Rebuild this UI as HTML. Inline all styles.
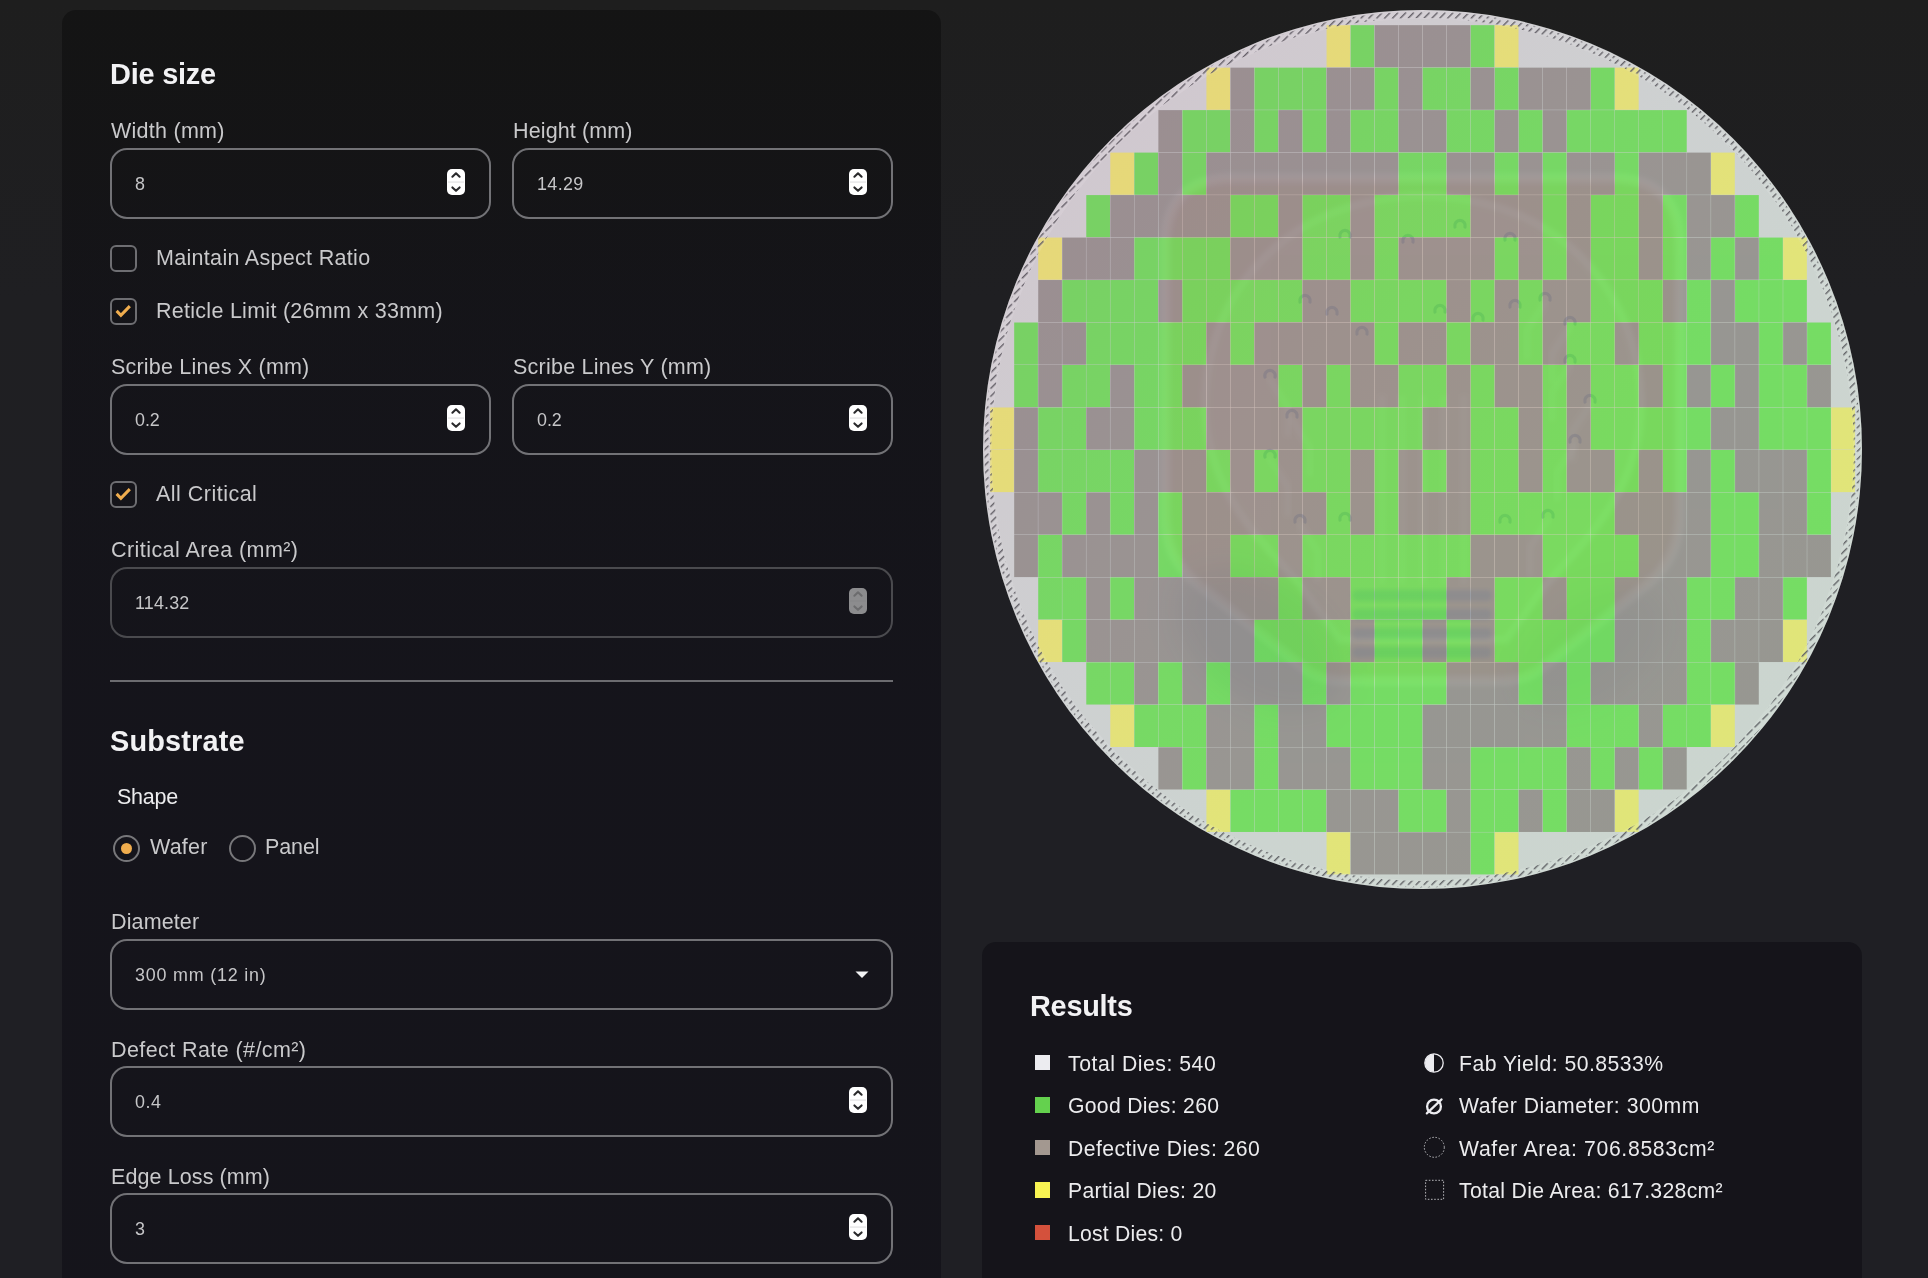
<!DOCTYPE html>
<html lang="en"><head><meta charset="utf-8"><title>Die Yield Calculator</title>
<style>
html,body{margin:0;padding:0}
body{width:1928px;height:1278px;overflow:hidden;background:linear-gradient(180deg,#1e1e1e 0px,#1f1f22 300px,#1f1f24 700px,#1f1f24 1278px);position:relative;font-family:"Liberation Sans",sans-serif;color:#d0d0d2}
.abs{position:absolute;white-space:nowrap}
.t{will-change:transform}
.panel{position:absolute;background:rgba(0,0,0,0.345);border-radius:14px}
.h{font-weight:bold;color:#f2f2f4;font-size:27px;line-height:30px}
.lbl{font-size:20px;line-height:24px;color:#cfcfd1;letter-spacing:0.35px}
.inp{position:absolute;box-sizing:border-box;height:71.3px;border:2px solid #727276;border-radius:17px}
.inp.dis{border-color:#4a4a4e}
.val{position:absolute;left:23px;top:22px;font-size:17.5px;line-height:22px;color:#c9c9cb;letter-spacing:0.6px}
.spin{position:absolute;right:24px;top:18.9px;width:18px;height:26px;border-radius:5px;background:#fff}
.spin.dis{background:#8c8c8e}
.cb{position:absolute;box-sizing:border-box;width:27px;height:27px;border:2px solid #6e6e72;border-radius:6px}
.rad{position:absolute;box-sizing:border-box;width:27px;height:27px;border:2px solid #77777a;border-radius:50%}
.sq{position:absolute;width:15.7px;height:15.6px}
.res{font-size:20px;line-height:24px;color:#ececee;letter-spacing:0.45px}
</style></head>
<body>
<div class="panel" style="left:62px;top:10px;width:879px;height:1300px;background:linear-gradient(180deg,rgba(0,0,0,0.345) 0px,rgba(1,0,7,0.345) 300px,rgba(2,0,10,0.345) 700px)"></div>
<div class="abs t " style="left:109.90px;top:57.39px;font-size:28.9px;line-height:35px;letter-spacing:-0.203px;font-weight:bold;color:#f2f2f4;">Die size</div>
<div class="abs t " style="left:110.80px;top:118.45px;font-size:21.5px;line-height:26px;letter-spacing:0.259px;color:#c9c9cb;">Width (mm)</div>
<div class="abs t " style="left:513.40px;top:118.45px;font-size:21.5px;line-height:26px;letter-spacing:0.123px;color:#c9c9cb;">Height (mm)</div>
<div class="inp" style="left:110.0px;top:148.2px;width:381.3px"><div class="spin"><svg width="18" height="26" viewBox="0 0 18 26" style="position:absolute;left:0;top:0"><path d="M5.4 7.7 L9 4.3 L12.6 7.7" fill="none" stroke="#2a2a2c" stroke-width="2.1" stroke-linecap="round" stroke-linejoin="round"/><path d="M5.4 18.4 L9 21.8 L12.6 18.4" fill="none" stroke="#2a2a2c" stroke-width="2.1" stroke-linecap="round" stroke-linejoin="round"/><rect x="1" y="12.6" width="16" height="0.9" fill="#d8d8da"/></svg></div></div>
<div class="abs t " style="left:135.30px;top:174.20px;font-size:17.9px;line-height:21px;letter-spacing:0.000px;color:#c6c6c8;">8</div>
<div class="inp" style="left:512.0px;top:148.2px;width:381.3px"><div class="spin"><svg width="18" height="26" viewBox="0 0 18 26" style="position:absolute;left:0;top:0"><path d="M5.4 7.7 L9 4.3 L12.6 7.7" fill="none" stroke="#2a2a2c" stroke-width="2.1" stroke-linecap="round" stroke-linejoin="round"/><path d="M5.4 18.4 L9 21.8 L12.6 18.4" fill="none" stroke="#2a2a2c" stroke-width="2.1" stroke-linecap="round" stroke-linejoin="round"/><rect x="1" y="12.6" width="16" height="0.9" fill="#d8d8da"/></svg></div></div>
<div class="abs t " style="left:537.30px;top:174.20px;font-size:17.9px;line-height:21px;letter-spacing:0.379px;color:#c6c6c8;">14.29</div>
<div class="cb" style="left:110.3px;top:245.3px"></div>
<div class="abs t " style="left:155.90px;top:245.35px;font-size:21.5px;line-height:26px;letter-spacing:0.308px;color:#c9c9cb;">Maintain Aspect Ratio</div>
<div class="cb" style="left:110.3px;top:297.6px"><svg width="23" height="23" viewBox="0 0 23 23" style="position:absolute;left:0;top:0"><path d="M4.6 10.9 L8.9 15.4 L17.8 6.1" fill="none" stroke="#f0ad4e" stroke-width="3.0" stroke-linecap="butt" stroke-linejoin="miter"/></svg></div>
<div class="abs t " style="left:155.90px;top:297.95px;font-size:21.5px;line-height:26px;letter-spacing:0.275px;color:#c9c9cb;">Reticle Limit (26mm x 33mm)</div>
<div class="abs t " style="left:110.80px;top:354.25px;font-size:21.5px;line-height:26px;letter-spacing:0.197px;color:#c9c9cb;">Scribe Lines X (mm)</div>
<div class="abs t " style="left:512.80px;top:354.25px;font-size:21.5px;line-height:26px;letter-spacing:0.240px;color:#c9c9cb;">Scribe Lines Y (mm)</div>
<div class="inp" style="left:110.0px;top:384.0px;width:381.3px"><div class="spin"><svg width="18" height="26" viewBox="0 0 18 26" style="position:absolute;left:0;top:0"><path d="M5.4 7.7 L9 4.3 L12.6 7.7" fill="none" stroke="#2a2a2c" stroke-width="2.1" stroke-linecap="round" stroke-linejoin="round"/><path d="M5.4 18.4 L9 21.8 L12.6 18.4" fill="none" stroke="#2a2a2c" stroke-width="2.1" stroke-linecap="round" stroke-linejoin="round"/><rect x="1" y="12.6" width="16" height="0.9" fill="#d8d8da"/></svg></div></div>
<div class="abs t " style="left:135.30px;top:409.80px;font-size:17.9px;line-height:21px;letter-spacing:-0.040px;color:#c6c6c8;">0.2</div>
<div class="inp" style="left:512.0px;top:384.0px;width:381.3px"><div class="spin"><svg width="18" height="26" viewBox="0 0 18 26" style="position:absolute;left:0;top:0"><path d="M5.4 7.7 L9 4.3 L12.6 7.7" fill="none" stroke="#2a2a2c" stroke-width="2.1" stroke-linecap="round" stroke-linejoin="round"/><path d="M5.4 18.4 L9 21.8 L12.6 18.4" fill="none" stroke="#2a2a2c" stroke-width="2.1" stroke-linecap="round" stroke-linejoin="round"/><rect x="1" y="12.6" width="16" height="0.9" fill="#d8d8da"/></svg></div></div>
<div class="abs t " style="left:537.30px;top:409.80px;font-size:17.9px;line-height:21px;letter-spacing:-0.040px;color:#c6c6c8;">0.2</div>
<div class="cb" style="left:110.3px;top:481.3px"><svg width="23" height="23" viewBox="0 0 23 23" style="position:absolute;left:0;top:0"><path d="M4.6 10.9 L8.9 15.4 L17.8 6.1" fill="none" stroke="#f0ad4e" stroke-width="3.0" stroke-linecap="butt" stroke-linejoin="miter"/></svg></div>
<div class="abs t " style="left:155.90px;top:481.25px;font-size:21.5px;line-height:26px;letter-spacing:0.485px;color:#c9c9cb;">All Critical</div>
<div class="abs t " style="left:110.80px;top:537.05px;font-size:21.5px;line-height:26px;letter-spacing:0.434px;color:#c9c9cb;">Critical Area (mm²)</div>
<div class="inp dis" style="left:110.0px;top:566.9px;width:783.3px"><div class="spin dis"><svg width="18" height="26" viewBox="0 0 18 26" style="position:absolute;left:0;top:0"><path d="M5.4 7.7 L9 4.3 L12.6 7.7" fill="none" stroke="#6c6c6e" stroke-width="2.1" stroke-linecap="round" stroke-linejoin="round"/><path d="M5.4 18.4 L9 21.8 L12.6 18.4" fill="none" stroke="#6c6c6e" stroke-width="2.1" stroke-linecap="round" stroke-linejoin="round"/><rect x="1" y="12.6" width="16" height="0.9" fill="#858587"/></svg></div></div>
<div class="abs t " style="left:135.30px;top:592.80px;font-size:17.9px;line-height:21px;letter-spacing:0.177px;color:#c6c6c8;">114.32</div>
<div class="abs" style="left:110px;top:679.8px;width:783px;height:2px;background:#6c6c70"></div>
<div class="abs t " style="left:109.60px;top:723.59px;font-size:28.9px;line-height:35px;letter-spacing:0.152px;font-weight:bold;color:#f2f2f4;">Substrate</div>
<div class="abs t " style="left:116.90px;top:784.45px;font-size:21.5px;line-height:26px;letter-spacing:-0.220px;color:#ececee;">Shape</div>
<div class="rad" style="left:113px;top:835.2px"><div style="position:absolute;left:5.8px;top:5.8px;width:11.4px;height:11.4px;border-radius:50%;background:#f0ad4e"></div></div>
<div class="abs t " style="left:149.60px;top:834.45px;font-size:21.5px;line-height:26px;letter-spacing:0.189px;color:#c9c9cb;">Wafer</div>
<div class="rad" style="left:229px;top:835.2px"></div>
<div class="abs t " style="left:265.30px;top:834.45px;font-size:21.5px;line-height:26px;letter-spacing:-0.099px;color:#c9c9cb;">Panel</div>
<div class="abs t " style="left:110.80px;top:909.15px;font-size:21.5px;line-height:26px;letter-spacing:0.125px;color:#c9c9cb;">Diameter</div>
<div class="inp" style="left:110.0px;top:939.2px;width:783.3px"><svg width="14" height="8" viewBox="0 0 14 8" style="position:absolute;right:22px;top:29.7px"><path d="M0.5 0.5 L13.5 0.5 L7 7 Z" fill="#f2f2f4"/></svg></div>
<div class="abs t " style="left:135.30px;top:965.10px;font-size:17.9px;line-height:21px;letter-spacing:0.794px;color:#c6c6c8;">300 mm (12 in)</div>
<div class="abs t " style="left:110.80px;top:1036.55px;font-size:21.5px;line-height:26px;letter-spacing:0.413px;color:#c9c9cb;">Defect Rate (#/cm²)</div>
<div class="inp" style="left:110.0px;top:1065.9px;width:783.3px"><div class="spin"><svg width="18" height="26" viewBox="0 0 18 26" style="position:absolute;left:0;top:0"><path d="M5.4 7.7 L9 4.3 L12.6 7.7" fill="none" stroke="#2a2a2c" stroke-width="2.1" stroke-linecap="round" stroke-linejoin="round"/><path d="M5.4 18.4 L9 21.8 L12.6 18.4" fill="none" stroke="#2a2a2c" stroke-width="2.1" stroke-linecap="round" stroke-linejoin="round"/><rect x="1" y="12.6" width="16" height="0.9" fill="#d8d8da"/></svg></div></div>
<div class="abs t " style="left:135.30px;top:1091.80px;font-size:17.9px;line-height:21px;letter-spacing:0.560px;color:#c6c6c8;">0.4</div>
<div class="abs t " style="left:110.80px;top:1163.75px;font-size:21.5px;line-height:26px;letter-spacing:0.098px;color:#c9c9cb;">Edge Loss (mm)</div>
<div class="inp" style="left:110.0px;top:1193.0px;width:783.3px"><div class="spin"><svg width="18" height="26" viewBox="0 0 18 26" style="position:absolute;left:0;top:0"><path d="M5.4 7.7 L9 4.3 L12.6 7.7" fill="none" stroke="#2a2a2c" stroke-width="2.1" stroke-linecap="round" stroke-linejoin="round"/><path d="M5.4 18.4 L9 21.8 L12.6 18.4" fill="none" stroke="#2a2a2c" stroke-width="2.1" stroke-linecap="round" stroke-linejoin="round"/><rect x="1" y="12.6" width="16" height="0.9" fill="#d8d8da"/></svg></div></div>
<div class="abs t " style="left:135.30px;top:1219.20px;font-size:17.9px;line-height:21px;letter-spacing:0.000px;color:#c6c6c8;">3</div>
<svg id="wafer" width="900" height="900" viewBox="972 0 900 900" style="position:absolute;left:972px;top:0">
<defs>
<clipPath id="wc"><circle cx="1422.5" cy="449.5" r="439.5"/></clipPath>
<linearGradient id="wg" gradientUnits="userSpaceOnUse" x1="1112" y1="139" x2="1733" y2="760"><stop offset="0" stop-color="rgb(255,240,252)"/><stop offset="0.38" stop-color="rgb(253,249,254)"/><stop offset="0.65" stop-color="rgb(251,254,253)"/><stop offset="1" stop-color="rgb(249,255,252)"/></linearGradient>
<pattern id="hatch" width="11.14" height="11.14" patternUnits="userSpaceOnUse" patternTransform="rotate(-45 1422.5 449.5)"><rect x="1.3" y="0" width="8.6" height="1.4" rx="0.7" fill="#66666a"/><rect x="6.87" y="5.57" width="4.3" height="1.4" fill="#66666a"/><rect x="0" y="5.57" width="4.3" height="1.4" fill="#66666a"/></pattern>
<filter id="bl" x="-20%" y="-20%" width="140%" height="140%"><feGaussianBlur stdDeviation="2"/></filter>
<filter id="bl2" x="-30%" y="-30%" width="160%" height="160%"><feGaussianBlur stdDeviation="14"/></filter>
</defs>
<circle cx="1422.5" cy="449.5" r="439.5" fill="rgb(208,213,210)"/>
<g clip-path="url(#wc)">
<path d="M1232 178 H1613 Q1680 178 1680 246 V515 Q1680 558 1648 584 L1542 668 Q1526 681 1500 681 H1345 Q1319 681 1303 668 L1197 584 Q1165 558 1165 515 V246 Q1165 178 1232 178 Z" fill="rgba(255,150,90,0.17)" stroke="rgba(255,255,255,0.40)" stroke-width="10" filter="url(#bl)"/>
<path d="M1423 196 C1290 196 1205 290 1205 405 C1205 490 1260 540 1300 585 L1340 640 H1506 L1546 585 C1586 540 1641 490 1641 405 C1641 290 1556 196 1423 196 Z" fill="rgba(255,255,255,0.10)" stroke="rgba(255,255,255,0.30)" stroke-width="8" filter="url(#bl)"/>
<ellipse cx="1260" cy="640" rx="95" ry="60" fill="rgba(70,90,140,0.16)" filter="url(#bl2)" transform="rotate(35 1260 640)"/>
<ellipse cx="1590" cy="650" rx="85" ry="50" fill="rgba(70,90,140,0.10)" filter="url(#bl2)" transform="rotate(-35 1590 650)"/>
<rect x="1352" y="590" width="140" height="11" rx="5" fill="rgba(60,120,200,0.28)" filter="url(#bl)"/>
<rect x="1352" y="609" width="140" height="11" rx="5" fill="rgba(60,120,200,0.28)" filter="url(#bl)"/>
<rect x="1352" y="628" width="140" height="11" rx="5" fill="rgba(60,120,200,0.28)" filter="url(#bl)"/>
<rect x="1352" y="647" width="140" height="11" rx="5" fill="rgba(60,120,200,0.28)" filter="url(#bl)"/>
<rect x="1378" y="395" width="8" height="190" rx="4" fill="rgba(255,255,255,0.16)" filter="url(#bl)"/>
<rect x="1398" y="395" width="8" height="190" rx="4" fill="rgba(255,255,255,0.16)" filter="url(#bl)"/>
<rect x="1419" y="395" width="8" height="190" rx="4" fill="rgba(255,255,255,0.16)" filter="url(#bl)"/>
<rect x="1440" y="395" width="8" height="190" rx="4" fill="rgba(255,255,255,0.16)" filter="url(#bl)"/>
<rect x="1460" y="395" width="8" height="190" rx="4" fill="rgba(255,255,255,0.16)" filter="url(#bl)"/>
<path d="M1345 240 L1345 267 L1345 293" fill="none" stroke="rgba(255,255,255,0.20)" stroke-width="7" stroke-linecap="round" stroke-linejoin="round" filter="url(#bl)"/>
<path d="M1340 237 A5.2 5.2 0 1 1 1350 237" fill="none" stroke="rgba(70,95,160,0.34)" stroke-width="3.2" stroke-linecap="round"/>
<path d="M1408 245 L1408 272 L1408 298" fill="none" stroke="rgba(255,255,255,0.20)" stroke-width="7" stroke-linecap="round" stroke-linejoin="round" filter="url(#bl)"/>
<path d="M1403 242 A5.2 5.2 0 1 1 1413 242" fill="none" stroke="rgba(70,95,160,0.34)" stroke-width="3.2" stroke-linecap="round"/>
<path d="M1460 230 L1460 257 L1460 283" fill="none" stroke="rgba(255,255,255,0.20)" stroke-width="7" stroke-linecap="round" stroke-linejoin="round" filter="url(#bl)"/>
<path d="M1455 227 A5.2 5.2 0 1 1 1465 227" fill="none" stroke="rgba(70,95,160,0.34)" stroke-width="3.2" stroke-linecap="round"/>
<path d="M1510 243 L1510 270 L1510 296" fill="none" stroke="rgba(255,255,255,0.20)" stroke-width="7" stroke-linecap="round" stroke-linejoin="round" filter="url(#bl)"/>
<path d="M1505 240 A5.2 5.2 0 1 1 1515 240" fill="none" stroke="rgba(70,95,160,0.34)" stroke-width="3.2" stroke-linecap="round"/>
<path d="M1305 305 L1305 332 L1305 358" fill="none" stroke="rgba(255,255,255,0.20)" stroke-width="7" stroke-linecap="round" stroke-linejoin="round" filter="url(#bl)"/>
<path d="M1300 302 A5.2 5.2 0 1 1 1310 302" fill="none" stroke="rgba(70,95,160,0.34)" stroke-width="3.2" stroke-linecap="round"/>
<path d="M1332 317 L1332 344 L1332 370" fill="none" stroke="rgba(255,255,255,0.20)" stroke-width="7" stroke-linecap="round" stroke-linejoin="round" filter="url(#bl)"/>
<path d="M1327 314 A5.2 5.2 0 1 1 1337 314" fill="none" stroke="rgba(70,95,160,0.34)" stroke-width="3.2" stroke-linecap="round"/>
<path d="M1362 337 L1362 364 L1362 390" fill="none" stroke="rgba(255,255,255,0.20)" stroke-width="7" stroke-linecap="round" stroke-linejoin="round" filter="url(#bl)"/>
<path d="M1357 334 A5.2 5.2 0 1 1 1367 334" fill="none" stroke="rgba(70,95,160,0.34)" stroke-width="3.2" stroke-linecap="round"/>
<path d="M1440 315 L1440 342 L1440 368" fill="none" stroke="rgba(255,255,255,0.20)" stroke-width="7" stroke-linecap="round" stroke-linejoin="round" filter="url(#bl)"/>
<path d="M1435 312 A5.2 5.2 0 1 1 1445 312" fill="none" stroke="rgba(70,95,160,0.34)" stroke-width="3.2" stroke-linecap="round"/>
<path d="M1478 323 L1478 350 L1478 376" fill="none" stroke="rgba(255,255,255,0.20)" stroke-width="7" stroke-linecap="round" stroke-linejoin="round" filter="url(#bl)"/>
<path d="M1473 320 A5.2 5.2 0 1 1 1483 320" fill="none" stroke="rgba(70,95,160,0.34)" stroke-width="3.2" stroke-linecap="round"/>
<path d="M1515 310 L1515 337 L1515 363" fill="none" stroke="rgba(255,255,255,0.20)" stroke-width="7" stroke-linecap="round" stroke-linejoin="round" filter="url(#bl)"/>
<path d="M1510 307 A5.2 5.2 0 1 1 1520 307" fill="none" stroke="rgba(70,95,160,0.34)" stroke-width="3.2" stroke-linecap="round"/>
<path d="M1545 303 L1527 330 L1527 356" fill="none" stroke="rgba(255,255,255,0.20)" stroke-width="7" stroke-linecap="round" stroke-linejoin="round" filter="url(#bl)"/>
<path d="M1540 300 A5.2 5.2 0 1 1 1550 300" fill="none" stroke="rgba(70,95,160,0.34)" stroke-width="3.2" stroke-linecap="round"/>
<path d="M1570 327 L1552 354 L1552 380" fill="none" stroke="rgba(255,255,255,0.20)" stroke-width="7" stroke-linecap="round" stroke-linejoin="round" filter="url(#bl)"/>
<path d="M1565 324 A5.2 5.2 0 1 1 1575 324" fill="none" stroke="rgba(70,95,160,0.34)" stroke-width="3.2" stroke-linecap="round"/>
<path d="M1270 380 L1288 407 L1288 433" fill="none" stroke="rgba(255,255,255,0.20)" stroke-width="7" stroke-linecap="round" stroke-linejoin="round" filter="url(#bl)"/>
<path d="M1265 377 A5.2 5.2 0 1 1 1275 377" fill="none" stroke="rgba(70,95,160,0.34)" stroke-width="3.2" stroke-linecap="round"/>
<path d="M1292 420 L1310 447 L1310 473" fill="none" stroke="rgba(255,255,255,0.20)" stroke-width="7" stroke-linecap="round" stroke-linejoin="round" filter="url(#bl)"/>
<path d="M1287 417 A5.2 5.2 0 1 1 1297 417" fill="none" stroke="rgba(70,95,160,0.34)" stroke-width="3.2" stroke-linecap="round"/>
<path d="M1270 460 L1288 487 L1288 513" fill="none" stroke="rgba(255,255,255,0.20)" stroke-width="7" stroke-linecap="round" stroke-linejoin="round" filter="url(#bl)"/>
<path d="M1265 457 A5.2 5.2 0 1 1 1275 457" fill="none" stroke="rgba(70,95,160,0.34)" stroke-width="3.2" stroke-linecap="round"/>
<path d="M1570 365 L1552 392 L1552 418" fill="none" stroke="rgba(255,255,255,0.20)" stroke-width="7" stroke-linecap="round" stroke-linejoin="round" filter="url(#bl)"/>
<path d="M1565 362 A5.2 5.2 0 1 1 1575 362" fill="none" stroke="rgba(70,95,160,0.34)" stroke-width="3.2" stroke-linecap="round"/>
<path d="M1590 405 L1572 432 L1572 458" fill="none" stroke="rgba(255,255,255,0.20)" stroke-width="7" stroke-linecap="round" stroke-linejoin="round" filter="url(#bl)"/>
<path d="M1585 402 A5.2 5.2 0 1 1 1595 402" fill="none" stroke="rgba(70,95,160,0.34)" stroke-width="3.2" stroke-linecap="round"/>
<path d="M1575 445 L1557 472 L1557 498" fill="none" stroke="rgba(255,255,255,0.20)" stroke-width="7" stroke-linecap="round" stroke-linejoin="round" filter="url(#bl)"/>
<path d="M1570 442 A5.2 5.2 0 1 1 1580 442" fill="none" stroke="rgba(70,95,160,0.34)" stroke-width="3.2" stroke-linecap="round"/>
<path d="M1300 525 L1318 552 L1318 578" fill="none" stroke="rgba(255,255,255,0.20)" stroke-width="7" stroke-linecap="round" stroke-linejoin="round" filter="url(#bl)"/>
<path d="M1295 522 A5.2 5.2 0 1 1 1305 522" fill="none" stroke="rgba(70,95,160,0.34)" stroke-width="3.2" stroke-linecap="round"/>
<path d="M1345 523 L1345 550 L1345 576" fill="none" stroke="rgba(255,255,255,0.20)" stroke-width="7" stroke-linecap="round" stroke-linejoin="round" filter="url(#bl)"/>
<path d="M1340 520 A5.2 5.2 0 1 1 1350 520" fill="none" stroke="rgba(70,95,160,0.34)" stroke-width="3.2" stroke-linecap="round"/>
<path d="M1505 525 L1505 552 L1505 578" fill="none" stroke="rgba(255,255,255,0.20)" stroke-width="7" stroke-linecap="round" stroke-linejoin="round" filter="url(#bl)"/>
<path d="M1500 522 A5.2 5.2 0 1 1 1510 522" fill="none" stroke="rgba(70,95,160,0.34)" stroke-width="3.2" stroke-linecap="round"/>
<path d="M1548 520 L1530 547 L1530 573" fill="none" stroke="rgba(255,255,255,0.20)" stroke-width="7" stroke-linecap="round" stroke-linejoin="round" filter="url(#bl)"/>
<path d="M1543 517 A5.2 5.2 0 1 1 1553 517" fill="none" stroke="rgba(70,95,160,0.34)" stroke-width="3.2" stroke-linecap="round"/>
</g>
<g clip-path="url(#wc)" opacity="0.67">
<rect x="1326.58" y="25.16" width="23.71" height="42.16" fill="rgb(241,238,80)"/>
<rect x="1350.61" y="25.16" width="23.71" height="42.16" fill="rgb(77,225,49)"/>
<rect x="1374.64" y="25.16" width="23.71" height="42.16" fill="rgb(129,122,117)"/>
<rect x="1398.67" y="25.16" width="23.71" height="42.16" fill="rgb(129,122,117)"/>
<rect x="1422.70" y="25.16" width="23.71" height="42.16" fill="rgb(129,122,117)"/>
<rect x="1446.73" y="25.16" width="23.71" height="42.16" fill="rgb(129,122,117)"/>
<rect x="1470.76" y="25.16" width="23.71" height="42.16" fill="rgb(77,225,49)"/>
<rect x="1494.79" y="25.16" width="23.71" height="42.16" fill="rgb(241,238,80)"/>
<rect x="1206.43" y="67.64" width="23.71" height="42.16" fill="rgb(241,238,80)"/>
<rect x="1230.46" y="67.64" width="23.71" height="42.16" fill="rgb(129,122,117)"/>
<rect x="1254.49" y="67.64" width="23.71" height="42.16" fill="rgb(77,225,49)"/>
<rect x="1278.52" y="67.64" width="23.71" height="42.16" fill="rgb(77,225,49)"/>
<rect x="1302.55" y="67.64" width="23.71" height="42.16" fill="rgb(77,225,49)"/>
<rect x="1326.58" y="67.64" width="23.71" height="42.16" fill="rgb(129,122,117)"/>
<rect x="1350.61" y="67.64" width="23.71" height="42.16" fill="rgb(129,122,117)"/>
<rect x="1374.64" y="67.64" width="23.71" height="42.16" fill="rgb(77,225,49)"/>
<rect x="1398.67" y="67.64" width="23.71" height="42.16" fill="rgb(129,122,117)"/>
<rect x="1422.70" y="67.64" width="23.71" height="42.16" fill="rgb(77,225,49)"/>
<rect x="1446.73" y="67.64" width="23.71" height="42.16" fill="rgb(77,225,49)"/>
<rect x="1470.76" y="67.64" width="23.71" height="42.16" fill="rgb(129,122,117)"/>
<rect x="1494.79" y="67.64" width="23.71" height="42.16" fill="rgb(77,225,49)"/>
<rect x="1518.82" y="67.64" width="23.71" height="42.16" fill="rgb(129,122,117)"/>
<rect x="1542.85" y="67.64" width="23.71" height="42.16" fill="rgb(129,122,117)"/>
<rect x="1566.88" y="67.64" width="23.71" height="42.16" fill="rgb(129,122,117)"/>
<rect x="1590.91" y="67.64" width="23.71" height="42.16" fill="rgb(77,225,49)"/>
<rect x="1614.94" y="67.64" width="23.71" height="42.16" fill="rgb(241,238,80)"/>
<rect x="1158.37" y="110.12" width="23.71" height="42.16" fill="rgb(129,122,117)"/>
<rect x="1182.40" y="110.12" width="23.71" height="42.16" fill="rgb(77,225,49)"/>
<rect x="1206.43" y="110.12" width="23.71" height="42.16" fill="rgb(77,225,49)"/>
<rect x="1230.46" y="110.12" width="23.71" height="42.16" fill="rgb(129,122,117)"/>
<rect x="1254.49" y="110.12" width="23.71" height="42.16" fill="rgb(77,225,49)"/>
<rect x="1278.52" y="110.12" width="23.71" height="42.16" fill="rgb(129,122,117)"/>
<rect x="1302.55" y="110.12" width="23.71" height="42.16" fill="rgb(77,225,49)"/>
<rect x="1326.58" y="110.12" width="23.71" height="42.16" fill="rgb(129,122,117)"/>
<rect x="1350.61" y="110.12" width="23.71" height="42.16" fill="rgb(77,225,49)"/>
<rect x="1374.64" y="110.12" width="23.71" height="42.16" fill="rgb(77,225,49)"/>
<rect x="1398.67" y="110.12" width="23.71" height="42.16" fill="rgb(129,122,117)"/>
<rect x="1422.70" y="110.12" width="23.71" height="42.16" fill="rgb(129,122,117)"/>
<rect x="1446.73" y="110.12" width="23.71" height="42.16" fill="rgb(77,225,49)"/>
<rect x="1470.76" y="110.12" width="23.71" height="42.16" fill="rgb(77,225,49)"/>
<rect x="1494.79" y="110.12" width="23.71" height="42.16" fill="rgb(129,122,117)"/>
<rect x="1518.82" y="110.12" width="23.71" height="42.16" fill="rgb(77,225,49)"/>
<rect x="1542.85" y="110.12" width="23.71" height="42.16" fill="rgb(129,122,117)"/>
<rect x="1566.88" y="110.12" width="23.71" height="42.16" fill="rgb(77,225,49)"/>
<rect x="1590.91" y="110.12" width="23.71" height="42.16" fill="rgb(77,225,49)"/>
<rect x="1614.94" y="110.12" width="23.71" height="42.16" fill="rgb(77,225,49)"/>
<rect x="1638.97" y="110.12" width="23.71" height="42.16" fill="rgb(77,225,49)"/>
<rect x="1663.00" y="110.12" width="23.71" height="42.16" fill="rgb(77,225,49)"/>
<rect x="1110.31" y="152.60" width="23.71" height="42.16" fill="rgb(241,238,80)"/>
<rect x="1134.34" y="152.60" width="23.71" height="42.16" fill="rgb(77,225,49)"/>
<rect x="1158.37" y="152.60" width="23.71" height="42.16" fill="rgb(129,122,117)"/>
<rect x="1182.40" y="152.60" width="23.71" height="42.16" fill="rgb(77,225,49)"/>
<rect x="1206.43" y="152.60" width="23.71" height="42.16" fill="rgb(129,122,117)"/>
<rect x="1230.46" y="152.60" width="23.71" height="42.16" fill="rgb(129,122,117)"/>
<rect x="1254.49" y="152.60" width="23.71" height="42.16" fill="rgb(129,122,117)"/>
<rect x="1278.52" y="152.60" width="23.71" height="42.16" fill="rgb(129,122,117)"/>
<rect x="1302.55" y="152.60" width="23.71" height="42.16" fill="rgb(129,122,117)"/>
<rect x="1326.58" y="152.60" width="23.71" height="42.16" fill="rgb(129,122,117)"/>
<rect x="1350.61" y="152.60" width="23.71" height="42.16" fill="rgb(129,122,117)"/>
<rect x="1374.64" y="152.60" width="23.71" height="42.16" fill="rgb(129,122,117)"/>
<rect x="1398.67" y="152.60" width="23.71" height="42.16" fill="rgb(77,225,49)"/>
<rect x="1422.70" y="152.60" width="23.71" height="42.16" fill="rgb(77,225,49)"/>
<rect x="1446.73" y="152.60" width="23.71" height="42.16" fill="rgb(129,122,117)"/>
<rect x="1470.76" y="152.60" width="23.71" height="42.16" fill="rgb(129,122,117)"/>
<rect x="1494.79" y="152.60" width="23.71" height="42.16" fill="rgb(77,225,49)"/>
<rect x="1518.82" y="152.60" width="23.71" height="42.16" fill="rgb(129,122,117)"/>
<rect x="1542.85" y="152.60" width="23.71" height="42.16" fill="rgb(77,225,49)"/>
<rect x="1566.88" y="152.60" width="23.71" height="42.16" fill="rgb(129,122,117)"/>
<rect x="1590.91" y="152.60" width="23.71" height="42.16" fill="rgb(129,122,117)"/>
<rect x="1614.94" y="152.60" width="23.71" height="42.16" fill="rgb(77,225,49)"/>
<rect x="1638.97" y="152.60" width="23.71" height="42.16" fill="rgb(129,122,117)"/>
<rect x="1663.00" y="152.60" width="23.71" height="42.16" fill="rgb(129,122,117)"/>
<rect x="1687.03" y="152.60" width="23.71" height="42.16" fill="rgb(129,122,117)"/>
<rect x="1711.06" y="152.60" width="23.71" height="42.16" fill="rgb(241,238,80)"/>
<rect x="1086.28" y="195.08" width="23.71" height="42.16" fill="rgb(77,225,49)"/>
<rect x="1110.31" y="195.08" width="23.71" height="42.16" fill="rgb(129,122,117)"/>
<rect x="1134.34" y="195.08" width="23.71" height="42.16" fill="rgb(129,122,117)"/>
<rect x="1158.37" y="195.08" width="23.71" height="42.16" fill="rgb(129,122,117)"/>
<rect x="1182.40" y="195.08" width="23.71" height="42.16" fill="rgb(129,122,117)"/>
<rect x="1206.43" y="195.08" width="23.71" height="42.16" fill="rgb(129,122,117)"/>
<rect x="1230.46" y="195.08" width="23.71" height="42.16" fill="rgb(77,225,49)"/>
<rect x="1254.49" y="195.08" width="23.71" height="42.16" fill="rgb(77,225,49)"/>
<rect x="1278.52" y="195.08" width="23.71" height="42.16" fill="rgb(129,122,117)"/>
<rect x="1302.55" y="195.08" width="23.71" height="42.16" fill="rgb(77,225,49)"/>
<rect x="1326.58" y="195.08" width="23.71" height="42.16" fill="rgb(77,225,49)"/>
<rect x="1350.61" y="195.08" width="23.71" height="42.16" fill="rgb(129,122,117)"/>
<rect x="1374.64" y="195.08" width="23.71" height="42.16" fill="rgb(77,225,49)"/>
<rect x="1398.67" y="195.08" width="23.71" height="42.16" fill="rgb(77,225,49)"/>
<rect x="1422.70" y="195.08" width="23.71" height="42.16" fill="rgb(77,225,49)"/>
<rect x="1446.73" y="195.08" width="23.71" height="42.16" fill="rgb(77,225,49)"/>
<rect x="1470.76" y="195.08" width="23.71" height="42.16" fill="rgb(129,122,117)"/>
<rect x="1494.79" y="195.08" width="23.71" height="42.16" fill="rgb(129,122,117)"/>
<rect x="1518.82" y="195.08" width="23.71" height="42.16" fill="rgb(129,122,117)"/>
<rect x="1542.85" y="195.08" width="23.71" height="42.16" fill="rgb(77,225,49)"/>
<rect x="1566.88" y="195.08" width="23.71" height="42.16" fill="rgb(129,122,117)"/>
<rect x="1590.91" y="195.08" width="23.71" height="42.16" fill="rgb(77,225,49)"/>
<rect x="1614.94" y="195.08" width="23.71" height="42.16" fill="rgb(77,225,49)"/>
<rect x="1638.97" y="195.08" width="23.71" height="42.16" fill="rgb(129,122,117)"/>
<rect x="1663.00" y="195.08" width="23.71" height="42.16" fill="rgb(77,225,49)"/>
<rect x="1687.03" y="195.08" width="23.71" height="42.16" fill="rgb(129,122,117)"/>
<rect x="1711.06" y="195.08" width="23.71" height="42.16" fill="rgb(129,122,117)"/>
<rect x="1735.09" y="195.08" width="23.71" height="42.16" fill="rgb(77,225,49)"/>
<rect x="1038.22" y="237.56" width="23.71" height="42.16" fill="rgb(241,238,80)"/>
<rect x="1062.25" y="237.56" width="23.71" height="42.16" fill="rgb(129,122,117)"/>
<rect x="1086.28" y="237.56" width="23.71" height="42.16" fill="rgb(129,122,117)"/>
<rect x="1110.31" y="237.56" width="23.71" height="42.16" fill="rgb(129,122,117)"/>
<rect x="1134.34" y="237.56" width="23.71" height="42.16" fill="rgb(77,225,49)"/>
<rect x="1158.37" y="237.56" width="23.71" height="42.16" fill="rgb(77,225,49)"/>
<rect x="1182.40" y="237.56" width="23.71" height="42.16" fill="rgb(77,225,49)"/>
<rect x="1206.43" y="237.56" width="23.71" height="42.16" fill="rgb(77,225,49)"/>
<rect x="1230.46" y="237.56" width="23.71" height="42.16" fill="rgb(129,122,117)"/>
<rect x="1254.49" y="237.56" width="23.71" height="42.16" fill="rgb(129,122,117)"/>
<rect x="1278.52" y="237.56" width="23.71" height="42.16" fill="rgb(129,122,117)"/>
<rect x="1302.55" y="237.56" width="23.71" height="42.16" fill="rgb(77,225,49)"/>
<rect x="1326.58" y="237.56" width="23.71" height="42.16" fill="rgb(77,225,49)"/>
<rect x="1350.61" y="237.56" width="23.71" height="42.16" fill="rgb(129,122,117)"/>
<rect x="1374.64" y="237.56" width="23.71" height="42.16" fill="rgb(77,225,49)"/>
<rect x="1398.67" y="237.56" width="23.71" height="42.16" fill="rgb(129,122,117)"/>
<rect x="1422.70" y="237.56" width="23.71" height="42.16" fill="rgb(129,122,117)"/>
<rect x="1446.73" y="237.56" width="23.71" height="42.16" fill="rgb(129,122,117)"/>
<rect x="1470.76" y="237.56" width="23.71" height="42.16" fill="rgb(129,122,117)"/>
<rect x="1494.79" y="237.56" width="23.71" height="42.16" fill="rgb(77,225,49)"/>
<rect x="1518.82" y="237.56" width="23.71" height="42.16" fill="rgb(129,122,117)"/>
<rect x="1542.85" y="237.56" width="23.71" height="42.16" fill="rgb(77,225,49)"/>
<rect x="1566.88" y="237.56" width="23.71" height="42.16" fill="rgb(129,122,117)"/>
<rect x="1590.91" y="237.56" width="23.71" height="42.16" fill="rgb(77,225,49)"/>
<rect x="1614.94" y="237.56" width="23.71" height="42.16" fill="rgb(77,225,49)"/>
<rect x="1638.97" y="237.56" width="23.71" height="42.16" fill="rgb(129,122,117)"/>
<rect x="1663.00" y="237.56" width="23.71" height="42.16" fill="rgb(77,225,49)"/>
<rect x="1687.03" y="237.56" width="23.71" height="42.16" fill="rgb(129,122,117)"/>
<rect x="1711.06" y="237.56" width="23.71" height="42.16" fill="rgb(77,225,49)"/>
<rect x="1735.09" y="237.56" width="23.71" height="42.16" fill="rgb(129,122,117)"/>
<rect x="1759.12" y="237.56" width="23.71" height="42.16" fill="rgb(77,225,49)"/>
<rect x="1783.15" y="237.56" width="23.71" height="42.16" fill="rgb(241,238,80)"/>
<rect x="1038.22" y="280.04" width="23.71" height="42.16" fill="rgb(129,122,117)"/>
<rect x="1062.25" y="280.04" width="23.71" height="42.16" fill="rgb(77,225,49)"/>
<rect x="1086.28" y="280.04" width="23.71" height="42.16" fill="rgb(77,225,49)"/>
<rect x="1110.31" y="280.04" width="23.71" height="42.16" fill="rgb(77,225,49)"/>
<rect x="1134.34" y="280.04" width="23.71" height="42.16" fill="rgb(77,225,49)"/>
<rect x="1158.37" y="280.04" width="23.71" height="42.16" fill="rgb(129,122,117)"/>
<rect x="1182.40" y="280.04" width="23.71" height="42.16" fill="rgb(77,225,49)"/>
<rect x="1206.43" y="280.04" width="23.71" height="42.16" fill="rgb(77,225,49)"/>
<rect x="1230.46" y="280.04" width="23.71" height="42.16" fill="rgb(77,225,49)"/>
<rect x="1254.49" y="280.04" width="23.71" height="42.16" fill="rgb(77,225,49)"/>
<rect x="1278.52" y="280.04" width="23.71" height="42.16" fill="rgb(77,225,49)"/>
<rect x="1302.55" y="280.04" width="23.71" height="42.16" fill="rgb(129,122,117)"/>
<rect x="1326.58" y="280.04" width="23.71" height="42.16" fill="rgb(129,122,117)"/>
<rect x="1350.61" y="280.04" width="23.71" height="42.16" fill="rgb(77,225,49)"/>
<rect x="1374.64" y="280.04" width="23.71" height="42.16" fill="rgb(77,225,49)"/>
<rect x="1398.67" y="280.04" width="23.71" height="42.16" fill="rgb(77,225,49)"/>
<rect x="1422.70" y="280.04" width="23.71" height="42.16" fill="rgb(77,225,49)"/>
<rect x="1446.73" y="280.04" width="23.71" height="42.16" fill="rgb(129,122,117)"/>
<rect x="1470.76" y="280.04" width="23.71" height="42.16" fill="rgb(77,225,49)"/>
<rect x="1494.79" y="280.04" width="23.71" height="42.16" fill="rgb(129,122,117)"/>
<rect x="1518.82" y="280.04" width="23.71" height="42.16" fill="rgb(77,225,49)"/>
<rect x="1542.85" y="280.04" width="23.71" height="42.16" fill="rgb(129,122,117)"/>
<rect x="1566.88" y="280.04" width="23.71" height="42.16" fill="rgb(129,122,117)"/>
<rect x="1590.91" y="280.04" width="23.71" height="42.16" fill="rgb(77,225,49)"/>
<rect x="1614.94" y="280.04" width="23.71" height="42.16" fill="rgb(77,225,49)"/>
<rect x="1638.97" y="280.04" width="23.71" height="42.16" fill="rgb(77,225,49)"/>
<rect x="1663.00" y="280.04" width="23.71" height="42.16" fill="rgb(129,122,117)"/>
<rect x="1687.03" y="280.04" width="23.71" height="42.16" fill="rgb(77,225,49)"/>
<rect x="1711.06" y="280.04" width="23.71" height="42.16" fill="rgb(129,122,117)"/>
<rect x="1735.09" y="280.04" width="23.71" height="42.16" fill="rgb(77,225,49)"/>
<rect x="1759.12" y="280.04" width="23.71" height="42.16" fill="rgb(77,225,49)"/>
<rect x="1783.15" y="280.04" width="23.71" height="42.16" fill="rgb(77,225,49)"/>
<rect x="1014.19" y="322.52" width="23.71" height="42.16" fill="rgb(77,225,49)"/>
<rect x="1038.22" y="322.52" width="23.71" height="42.16" fill="rgb(129,122,117)"/>
<rect x="1062.25" y="322.52" width="23.71" height="42.16" fill="rgb(129,122,117)"/>
<rect x="1086.28" y="322.52" width="23.71" height="42.16" fill="rgb(77,225,49)"/>
<rect x="1110.31" y="322.52" width="23.71" height="42.16" fill="rgb(77,225,49)"/>
<rect x="1134.34" y="322.52" width="23.71" height="42.16" fill="rgb(77,225,49)"/>
<rect x="1158.37" y="322.52" width="23.71" height="42.16" fill="rgb(77,225,49)"/>
<rect x="1182.40" y="322.52" width="23.71" height="42.16" fill="rgb(77,225,49)"/>
<rect x="1206.43" y="322.52" width="23.71" height="42.16" fill="rgb(129,122,117)"/>
<rect x="1230.46" y="322.52" width="23.71" height="42.16" fill="rgb(77,225,49)"/>
<rect x="1254.49" y="322.52" width="23.71" height="42.16" fill="rgb(129,122,117)"/>
<rect x="1278.52" y="322.52" width="23.71" height="42.16" fill="rgb(129,122,117)"/>
<rect x="1302.55" y="322.52" width="23.71" height="42.16" fill="rgb(129,122,117)"/>
<rect x="1326.58" y="322.52" width="23.71" height="42.16" fill="rgb(129,122,117)"/>
<rect x="1350.61" y="322.52" width="23.71" height="42.16" fill="rgb(129,122,117)"/>
<rect x="1374.64" y="322.52" width="23.71" height="42.16" fill="rgb(77,225,49)"/>
<rect x="1398.67" y="322.52" width="23.71" height="42.16" fill="rgb(129,122,117)"/>
<rect x="1422.70" y="322.52" width="23.71" height="42.16" fill="rgb(129,122,117)"/>
<rect x="1446.73" y="322.52" width="23.71" height="42.16" fill="rgb(77,225,49)"/>
<rect x="1470.76" y="322.52" width="23.71" height="42.16" fill="rgb(129,122,117)"/>
<rect x="1494.79" y="322.52" width="23.71" height="42.16" fill="rgb(129,122,117)"/>
<rect x="1518.82" y="322.52" width="23.71" height="42.16" fill="rgb(77,225,49)"/>
<rect x="1542.85" y="322.52" width="23.71" height="42.16" fill="rgb(129,122,117)"/>
<rect x="1566.88" y="322.52" width="23.71" height="42.16" fill="rgb(77,225,49)"/>
<rect x="1590.91" y="322.52" width="23.71" height="42.16" fill="rgb(77,225,49)"/>
<rect x="1614.94" y="322.52" width="23.71" height="42.16" fill="rgb(129,122,117)"/>
<rect x="1638.97" y="322.52" width="23.71" height="42.16" fill="rgb(77,225,49)"/>
<rect x="1663.00" y="322.52" width="23.71" height="42.16" fill="rgb(77,225,49)"/>
<rect x="1687.03" y="322.52" width="23.71" height="42.16" fill="rgb(77,225,49)"/>
<rect x="1711.06" y="322.52" width="23.71" height="42.16" fill="rgb(129,122,117)"/>
<rect x="1735.09" y="322.52" width="23.71" height="42.16" fill="rgb(129,122,117)"/>
<rect x="1759.12" y="322.52" width="23.71" height="42.16" fill="rgb(77,225,49)"/>
<rect x="1783.15" y="322.52" width="23.71" height="42.16" fill="rgb(129,122,117)"/>
<rect x="1807.18" y="322.52" width="23.71" height="42.16" fill="rgb(77,225,49)"/>
<rect x="1014.19" y="365.00" width="23.71" height="42.16" fill="rgb(77,225,49)"/>
<rect x="1038.22" y="365.00" width="23.71" height="42.16" fill="rgb(129,122,117)"/>
<rect x="1062.25" y="365.00" width="23.71" height="42.16" fill="rgb(77,225,49)"/>
<rect x="1086.28" y="365.00" width="23.71" height="42.16" fill="rgb(77,225,49)"/>
<rect x="1110.31" y="365.00" width="23.71" height="42.16" fill="rgb(129,122,117)"/>
<rect x="1134.34" y="365.00" width="23.71" height="42.16" fill="rgb(77,225,49)"/>
<rect x="1158.37" y="365.00" width="23.71" height="42.16" fill="rgb(77,225,49)"/>
<rect x="1182.40" y="365.00" width="23.71" height="42.16" fill="rgb(129,122,117)"/>
<rect x="1206.43" y="365.00" width="23.71" height="42.16" fill="rgb(129,122,117)"/>
<rect x="1230.46" y="365.00" width="23.71" height="42.16" fill="rgb(129,122,117)"/>
<rect x="1254.49" y="365.00" width="23.71" height="42.16" fill="rgb(129,122,117)"/>
<rect x="1278.52" y="365.00" width="23.71" height="42.16" fill="rgb(77,225,49)"/>
<rect x="1302.55" y="365.00" width="23.71" height="42.16" fill="rgb(129,122,117)"/>
<rect x="1326.58" y="365.00" width="23.71" height="42.16" fill="rgb(77,225,49)"/>
<rect x="1350.61" y="365.00" width="23.71" height="42.16" fill="rgb(129,122,117)"/>
<rect x="1374.64" y="365.00" width="23.71" height="42.16" fill="rgb(129,122,117)"/>
<rect x="1398.67" y="365.00" width="23.71" height="42.16" fill="rgb(77,225,49)"/>
<rect x="1422.70" y="365.00" width="23.71" height="42.16" fill="rgb(77,225,49)"/>
<rect x="1446.73" y="365.00" width="23.71" height="42.16" fill="rgb(129,122,117)"/>
<rect x="1470.76" y="365.00" width="23.71" height="42.16" fill="rgb(77,225,49)"/>
<rect x="1494.79" y="365.00" width="23.71" height="42.16" fill="rgb(129,122,117)"/>
<rect x="1518.82" y="365.00" width="23.71" height="42.16" fill="rgb(129,122,117)"/>
<rect x="1542.85" y="365.00" width="23.71" height="42.16" fill="rgb(77,225,49)"/>
<rect x="1566.88" y="365.00" width="23.71" height="42.16" fill="rgb(129,122,117)"/>
<rect x="1590.91" y="365.00" width="23.71" height="42.16" fill="rgb(77,225,49)"/>
<rect x="1614.94" y="365.00" width="23.71" height="42.16" fill="rgb(77,225,49)"/>
<rect x="1638.97" y="365.00" width="23.71" height="42.16" fill="rgb(129,122,117)"/>
<rect x="1663.00" y="365.00" width="23.71" height="42.16" fill="rgb(77,225,49)"/>
<rect x="1687.03" y="365.00" width="23.71" height="42.16" fill="rgb(129,122,117)"/>
<rect x="1711.06" y="365.00" width="23.71" height="42.16" fill="rgb(77,225,49)"/>
<rect x="1735.09" y="365.00" width="23.71" height="42.16" fill="rgb(129,122,117)"/>
<rect x="1759.12" y="365.00" width="23.71" height="42.16" fill="rgb(77,225,49)"/>
<rect x="1783.15" y="365.00" width="23.71" height="42.16" fill="rgb(77,225,49)"/>
<rect x="1807.18" y="365.00" width="23.71" height="42.16" fill="rgb(129,122,117)"/>
<rect x="990.16" y="407.48" width="23.71" height="42.16" fill="rgb(241,238,80)"/>
<rect x="1014.19" y="407.48" width="23.71" height="42.16" fill="rgb(129,122,117)"/>
<rect x="1038.22" y="407.48" width="23.71" height="42.16" fill="rgb(77,225,49)"/>
<rect x="1062.25" y="407.48" width="23.71" height="42.16" fill="rgb(77,225,49)"/>
<rect x="1086.28" y="407.48" width="23.71" height="42.16" fill="rgb(129,122,117)"/>
<rect x="1110.31" y="407.48" width="23.71" height="42.16" fill="rgb(129,122,117)"/>
<rect x="1134.34" y="407.48" width="23.71" height="42.16" fill="rgb(77,225,49)"/>
<rect x="1158.37" y="407.48" width="23.71" height="42.16" fill="rgb(77,225,49)"/>
<rect x="1182.40" y="407.48" width="23.71" height="42.16" fill="rgb(77,225,49)"/>
<rect x="1206.43" y="407.48" width="23.71" height="42.16" fill="rgb(129,122,117)"/>
<rect x="1230.46" y="407.48" width="23.71" height="42.16" fill="rgb(129,122,117)"/>
<rect x="1254.49" y="407.48" width="23.71" height="42.16" fill="rgb(129,122,117)"/>
<rect x="1278.52" y="407.48" width="23.71" height="42.16" fill="rgb(129,122,117)"/>
<rect x="1302.55" y="407.48" width="23.71" height="42.16" fill="rgb(77,225,49)"/>
<rect x="1326.58" y="407.48" width="23.71" height="42.16" fill="rgb(77,225,49)"/>
<rect x="1350.61" y="407.48" width="23.71" height="42.16" fill="rgb(77,225,49)"/>
<rect x="1374.64" y="407.48" width="23.71" height="42.16" fill="rgb(77,225,49)"/>
<rect x="1398.67" y="407.48" width="23.71" height="42.16" fill="rgb(77,225,49)"/>
<rect x="1422.70" y="407.48" width="23.71" height="42.16" fill="rgb(129,122,117)"/>
<rect x="1446.73" y="407.48" width="23.71" height="42.16" fill="rgb(129,122,117)"/>
<rect x="1470.76" y="407.48" width="23.71" height="42.16" fill="rgb(77,225,49)"/>
<rect x="1494.79" y="407.48" width="23.71" height="42.16" fill="rgb(77,225,49)"/>
<rect x="1518.82" y="407.48" width="23.71" height="42.16" fill="rgb(129,122,117)"/>
<rect x="1542.85" y="407.48" width="23.71" height="42.16" fill="rgb(77,225,49)"/>
<rect x="1566.88" y="407.48" width="23.71" height="42.16" fill="rgb(129,122,117)"/>
<rect x="1590.91" y="407.48" width="23.71" height="42.16" fill="rgb(77,225,49)"/>
<rect x="1614.94" y="407.48" width="23.71" height="42.16" fill="rgb(77,225,49)"/>
<rect x="1638.97" y="407.48" width="23.71" height="42.16" fill="rgb(77,225,49)"/>
<rect x="1663.00" y="407.48" width="23.71" height="42.16" fill="rgb(77,225,49)"/>
<rect x="1687.03" y="407.48" width="23.71" height="42.16" fill="rgb(77,225,49)"/>
<rect x="1711.06" y="407.48" width="23.71" height="42.16" fill="rgb(129,122,117)"/>
<rect x="1735.09" y="407.48" width="23.71" height="42.16" fill="rgb(129,122,117)"/>
<rect x="1759.12" y="407.48" width="23.71" height="42.16" fill="rgb(77,225,49)"/>
<rect x="1783.15" y="407.48" width="23.71" height="42.16" fill="rgb(77,225,49)"/>
<rect x="1807.18" y="407.48" width="23.71" height="42.16" fill="rgb(77,225,49)"/>
<rect x="1831.21" y="407.48" width="23.71" height="42.16" fill="rgb(241,238,80)"/>
<rect x="990.16" y="449.96" width="23.71" height="42.16" fill="rgb(241,238,80)"/>
<rect x="1014.19" y="449.96" width="23.71" height="42.16" fill="rgb(129,122,117)"/>
<rect x="1038.22" y="449.96" width="23.71" height="42.16" fill="rgb(77,225,49)"/>
<rect x="1062.25" y="449.96" width="23.71" height="42.16" fill="rgb(77,225,49)"/>
<rect x="1086.28" y="449.96" width="23.71" height="42.16" fill="rgb(77,225,49)"/>
<rect x="1110.31" y="449.96" width="23.71" height="42.16" fill="rgb(77,225,49)"/>
<rect x="1134.34" y="449.96" width="23.71" height="42.16" fill="rgb(129,122,117)"/>
<rect x="1158.37" y="449.96" width="23.71" height="42.16" fill="rgb(129,122,117)"/>
<rect x="1182.40" y="449.96" width="23.71" height="42.16" fill="rgb(129,122,117)"/>
<rect x="1206.43" y="449.96" width="23.71" height="42.16" fill="rgb(77,225,49)"/>
<rect x="1230.46" y="449.96" width="23.71" height="42.16" fill="rgb(129,122,117)"/>
<rect x="1254.49" y="449.96" width="23.71" height="42.16" fill="rgb(77,225,49)"/>
<rect x="1278.52" y="449.96" width="23.71" height="42.16" fill="rgb(129,122,117)"/>
<rect x="1302.55" y="449.96" width="23.71" height="42.16" fill="rgb(77,225,49)"/>
<rect x="1326.58" y="449.96" width="23.71" height="42.16" fill="rgb(77,225,49)"/>
<rect x="1350.61" y="449.96" width="23.71" height="42.16" fill="rgb(129,122,117)"/>
<rect x="1374.64" y="449.96" width="23.71" height="42.16" fill="rgb(77,225,49)"/>
<rect x="1398.67" y="449.96" width="23.71" height="42.16" fill="rgb(129,122,117)"/>
<rect x="1422.70" y="449.96" width="23.71" height="42.16" fill="rgb(77,225,49)"/>
<rect x="1446.73" y="449.96" width="23.71" height="42.16" fill="rgb(129,122,117)"/>
<rect x="1470.76" y="449.96" width="23.71" height="42.16" fill="rgb(77,225,49)"/>
<rect x="1494.79" y="449.96" width="23.71" height="42.16" fill="rgb(77,225,49)"/>
<rect x="1518.82" y="449.96" width="23.71" height="42.16" fill="rgb(129,122,117)"/>
<rect x="1542.85" y="449.96" width="23.71" height="42.16" fill="rgb(77,225,49)"/>
<rect x="1566.88" y="449.96" width="23.71" height="42.16" fill="rgb(129,122,117)"/>
<rect x="1590.91" y="449.96" width="23.71" height="42.16" fill="rgb(129,122,117)"/>
<rect x="1614.94" y="449.96" width="23.71" height="42.16" fill="rgb(77,225,49)"/>
<rect x="1638.97" y="449.96" width="23.71" height="42.16" fill="rgb(129,122,117)"/>
<rect x="1663.00" y="449.96" width="23.71" height="42.16" fill="rgb(77,225,49)"/>
<rect x="1687.03" y="449.96" width="23.71" height="42.16" fill="rgb(129,122,117)"/>
<rect x="1711.06" y="449.96" width="23.71" height="42.16" fill="rgb(77,225,49)"/>
<rect x="1735.09" y="449.96" width="23.71" height="42.16" fill="rgb(129,122,117)"/>
<rect x="1759.12" y="449.96" width="23.71" height="42.16" fill="rgb(129,122,117)"/>
<rect x="1783.15" y="449.96" width="23.71" height="42.16" fill="rgb(129,122,117)"/>
<rect x="1807.18" y="449.96" width="23.71" height="42.16" fill="rgb(77,225,49)"/>
<rect x="1831.21" y="449.96" width="23.71" height="42.16" fill="rgb(241,238,80)"/>
<rect x="1014.19" y="492.44" width="23.71" height="42.16" fill="rgb(129,122,117)"/>
<rect x="1038.22" y="492.44" width="23.71" height="42.16" fill="rgb(129,122,117)"/>
<rect x="1062.25" y="492.44" width="23.71" height="42.16" fill="rgb(77,225,49)"/>
<rect x="1086.28" y="492.44" width="23.71" height="42.16" fill="rgb(129,122,117)"/>
<rect x="1110.31" y="492.44" width="23.71" height="42.16" fill="rgb(77,225,49)"/>
<rect x="1134.34" y="492.44" width="23.71" height="42.16" fill="rgb(129,122,117)"/>
<rect x="1158.37" y="492.44" width="23.71" height="42.16" fill="rgb(77,225,49)"/>
<rect x="1182.40" y="492.44" width="23.71" height="42.16" fill="rgb(129,122,117)"/>
<rect x="1206.43" y="492.44" width="23.71" height="42.16" fill="rgb(129,122,117)"/>
<rect x="1230.46" y="492.44" width="23.71" height="42.16" fill="rgb(129,122,117)"/>
<rect x="1254.49" y="492.44" width="23.71" height="42.16" fill="rgb(129,122,117)"/>
<rect x="1278.52" y="492.44" width="23.71" height="42.16" fill="rgb(129,122,117)"/>
<rect x="1302.55" y="492.44" width="23.71" height="42.16" fill="rgb(129,122,117)"/>
<rect x="1326.58" y="492.44" width="23.71" height="42.16" fill="rgb(77,225,49)"/>
<rect x="1350.61" y="492.44" width="23.71" height="42.16" fill="rgb(129,122,117)"/>
<rect x="1374.64" y="492.44" width="23.71" height="42.16" fill="rgb(77,225,49)"/>
<rect x="1398.67" y="492.44" width="23.71" height="42.16" fill="rgb(129,122,117)"/>
<rect x="1422.70" y="492.44" width="23.71" height="42.16" fill="rgb(129,122,117)"/>
<rect x="1446.73" y="492.44" width="23.71" height="42.16" fill="rgb(129,122,117)"/>
<rect x="1470.76" y="492.44" width="23.71" height="42.16" fill="rgb(77,225,49)"/>
<rect x="1494.79" y="492.44" width="23.71" height="42.16" fill="rgb(77,225,49)"/>
<rect x="1518.82" y="492.44" width="23.71" height="42.16" fill="rgb(77,225,49)"/>
<rect x="1542.85" y="492.44" width="23.71" height="42.16" fill="rgb(77,225,49)"/>
<rect x="1566.88" y="492.44" width="23.71" height="42.16" fill="rgb(77,225,49)"/>
<rect x="1590.91" y="492.44" width="23.71" height="42.16" fill="rgb(77,225,49)"/>
<rect x="1614.94" y="492.44" width="23.71" height="42.16" fill="rgb(129,122,117)"/>
<rect x="1638.97" y="492.44" width="23.71" height="42.16" fill="rgb(129,122,117)"/>
<rect x="1663.00" y="492.44" width="23.71" height="42.16" fill="rgb(129,122,117)"/>
<rect x="1687.03" y="492.44" width="23.71" height="42.16" fill="rgb(129,122,117)"/>
<rect x="1711.06" y="492.44" width="23.71" height="42.16" fill="rgb(77,225,49)"/>
<rect x="1735.09" y="492.44" width="23.71" height="42.16" fill="rgb(77,225,49)"/>
<rect x="1759.12" y="492.44" width="23.71" height="42.16" fill="rgb(129,122,117)"/>
<rect x="1783.15" y="492.44" width="23.71" height="42.16" fill="rgb(129,122,117)"/>
<rect x="1807.18" y="492.44" width="23.71" height="42.16" fill="rgb(77,225,49)"/>
<rect x="1014.19" y="534.92" width="23.71" height="42.16" fill="rgb(129,122,117)"/>
<rect x="1038.22" y="534.92" width="23.71" height="42.16" fill="rgb(77,225,49)"/>
<rect x="1062.25" y="534.92" width="23.71" height="42.16" fill="rgb(129,122,117)"/>
<rect x="1086.28" y="534.92" width="23.71" height="42.16" fill="rgb(129,122,117)"/>
<rect x="1110.31" y="534.92" width="23.71" height="42.16" fill="rgb(129,122,117)"/>
<rect x="1134.34" y="534.92" width="23.71" height="42.16" fill="rgb(129,122,117)"/>
<rect x="1158.37" y="534.92" width="23.71" height="42.16" fill="rgb(77,225,49)"/>
<rect x="1182.40" y="534.92" width="23.71" height="42.16" fill="rgb(129,122,117)"/>
<rect x="1206.43" y="534.92" width="23.71" height="42.16" fill="rgb(129,122,117)"/>
<rect x="1230.46" y="534.92" width="23.71" height="42.16" fill="rgb(77,225,49)"/>
<rect x="1254.49" y="534.92" width="23.71" height="42.16" fill="rgb(77,225,49)"/>
<rect x="1278.52" y="534.92" width="23.71" height="42.16" fill="rgb(129,122,117)"/>
<rect x="1302.55" y="534.92" width="23.71" height="42.16" fill="rgb(77,225,49)"/>
<rect x="1326.58" y="534.92" width="23.71" height="42.16" fill="rgb(77,225,49)"/>
<rect x="1350.61" y="534.92" width="23.71" height="42.16" fill="rgb(77,225,49)"/>
<rect x="1374.64" y="534.92" width="23.71" height="42.16" fill="rgb(77,225,49)"/>
<rect x="1398.67" y="534.92" width="23.71" height="42.16" fill="rgb(77,225,49)"/>
<rect x="1422.70" y="534.92" width="23.71" height="42.16" fill="rgb(77,225,49)"/>
<rect x="1446.73" y="534.92" width="23.71" height="42.16" fill="rgb(77,225,49)"/>
<rect x="1470.76" y="534.92" width="23.71" height="42.16" fill="rgb(129,122,117)"/>
<rect x="1494.79" y="534.92" width="23.71" height="42.16" fill="rgb(129,122,117)"/>
<rect x="1518.82" y="534.92" width="23.71" height="42.16" fill="rgb(129,122,117)"/>
<rect x="1542.85" y="534.92" width="23.71" height="42.16" fill="rgb(77,225,49)"/>
<rect x="1566.88" y="534.92" width="23.71" height="42.16" fill="rgb(77,225,49)"/>
<rect x="1590.91" y="534.92" width="23.71" height="42.16" fill="rgb(77,225,49)"/>
<rect x="1614.94" y="534.92" width="23.71" height="42.16" fill="rgb(77,225,49)"/>
<rect x="1638.97" y="534.92" width="23.71" height="42.16" fill="rgb(129,122,117)"/>
<rect x="1663.00" y="534.92" width="23.71" height="42.16" fill="rgb(129,122,117)"/>
<rect x="1687.03" y="534.92" width="23.71" height="42.16" fill="rgb(129,122,117)"/>
<rect x="1711.06" y="534.92" width="23.71" height="42.16" fill="rgb(77,225,49)"/>
<rect x="1735.09" y="534.92" width="23.71" height="42.16" fill="rgb(77,225,49)"/>
<rect x="1759.12" y="534.92" width="23.71" height="42.16" fill="rgb(129,122,117)"/>
<rect x="1783.15" y="534.92" width="23.71" height="42.16" fill="rgb(129,122,117)"/>
<rect x="1807.18" y="534.92" width="23.71" height="42.16" fill="rgb(129,122,117)"/>
<rect x="1038.22" y="577.40" width="23.71" height="42.16" fill="rgb(77,225,49)"/>
<rect x="1062.25" y="577.40" width="23.71" height="42.16" fill="rgb(77,225,49)"/>
<rect x="1086.28" y="577.40" width="23.71" height="42.16" fill="rgb(129,122,117)"/>
<rect x="1110.31" y="577.40" width="23.71" height="42.16" fill="rgb(77,225,49)"/>
<rect x="1134.34" y="577.40" width="23.71" height="42.16" fill="rgb(129,122,117)"/>
<rect x="1158.37" y="577.40" width="23.71" height="42.16" fill="rgb(129,122,117)"/>
<rect x="1182.40" y="577.40" width="23.71" height="42.16" fill="rgb(129,122,117)"/>
<rect x="1206.43" y="577.40" width="23.71" height="42.16" fill="rgb(129,122,117)"/>
<rect x="1230.46" y="577.40" width="23.71" height="42.16" fill="rgb(129,122,117)"/>
<rect x="1254.49" y="577.40" width="23.71" height="42.16" fill="rgb(129,122,117)"/>
<rect x="1278.52" y="577.40" width="23.71" height="42.16" fill="rgb(77,225,49)"/>
<rect x="1302.55" y="577.40" width="23.71" height="42.16" fill="rgb(129,122,117)"/>
<rect x="1326.58" y="577.40" width="23.71" height="42.16" fill="rgb(129,122,117)"/>
<rect x="1350.61" y="577.40" width="23.71" height="42.16" fill="rgb(77,225,49)"/>
<rect x="1374.64" y="577.40" width="23.71" height="42.16" fill="rgb(77,225,49)"/>
<rect x="1398.67" y="577.40" width="23.71" height="42.16" fill="rgb(77,225,49)"/>
<rect x="1422.70" y="577.40" width="23.71" height="42.16" fill="rgb(77,225,49)"/>
<rect x="1446.73" y="577.40" width="23.71" height="42.16" fill="rgb(129,122,117)"/>
<rect x="1470.76" y="577.40" width="23.71" height="42.16" fill="rgb(129,122,117)"/>
<rect x="1494.79" y="577.40" width="23.71" height="42.16" fill="rgb(77,225,49)"/>
<rect x="1518.82" y="577.40" width="23.71" height="42.16" fill="rgb(77,225,49)"/>
<rect x="1542.85" y="577.40" width="23.71" height="42.16" fill="rgb(129,122,117)"/>
<rect x="1566.88" y="577.40" width="23.71" height="42.16" fill="rgb(77,225,49)"/>
<rect x="1590.91" y="577.40" width="23.71" height="42.16" fill="rgb(77,225,49)"/>
<rect x="1614.94" y="577.40" width="23.71" height="42.16" fill="rgb(129,122,117)"/>
<rect x="1638.97" y="577.40" width="23.71" height="42.16" fill="rgb(129,122,117)"/>
<rect x="1663.00" y="577.40" width="23.71" height="42.16" fill="rgb(129,122,117)"/>
<rect x="1687.03" y="577.40" width="23.71" height="42.16" fill="rgb(77,225,49)"/>
<rect x="1711.06" y="577.40" width="23.71" height="42.16" fill="rgb(77,225,49)"/>
<rect x="1735.09" y="577.40" width="23.71" height="42.16" fill="rgb(129,122,117)"/>
<rect x="1759.12" y="577.40" width="23.71" height="42.16" fill="rgb(129,122,117)"/>
<rect x="1783.15" y="577.40" width="23.71" height="42.16" fill="rgb(77,225,49)"/>
<rect x="1038.22" y="619.88" width="23.71" height="42.16" fill="rgb(241,238,80)"/>
<rect x="1062.25" y="619.88" width="23.71" height="42.16" fill="rgb(77,225,49)"/>
<rect x="1086.28" y="619.88" width="23.71" height="42.16" fill="rgb(129,122,117)"/>
<rect x="1110.31" y="619.88" width="23.71" height="42.16" fill="rgb(129,122,117)"/>
<rect x="1134.34" y="619.88" width="23.71" height="42.16" fill="rgb(129,122,117)"/>
<rect x="1158.37" y="619.88" width="23.71" height="42.16" fill="rgb(129,122,117)"/>
<rect x="1182.40" y="619.88" width="23.71" height="42.16" fill="rgb(129,122,117)"/>
<rect x="1206.43" y="619.88" width="23.71" height="42.16" fill="rgb(129,122,117)"/>
<rect x="1230.46" y="619.88" width="23.71" height="42.16" fill="rgb(129,122,117)"/>
<rect x="1254.49" y="619.88" width="23.71" height="42.16" fill="rgb(77,225,49)"/>
<rect x="1278.52" y="619.88" width="23.71" height="42.16" fill="rgb(77,225,49)"/>
<rect x="1302.55" y="619.88" width="23.71" height="42.16" fill="rgb(77,225,49)"/>
<rect x="1326.58" y="619.88" width="23.71" height="42.16" fill="rgb(77,225,49)"/>
<rect x="1350.61" y="619.88" width="23.71" height="42.16" fill="rgb(129,122,117)"/>
<rect x="1374.64" y="619.88" width="23.71" height="42.16" fill="rgb(77,225,49)"/>
<rect x="1398.67" y="619.88" width="23.71" height="42.16" fill="rgb(77,225,49)"/>
<rect x="1422.70" y="619.88" width="23.71" height="42.16" fill="rgb(129,122,117)"/>
<rect x="1446.73" y="619.88" width="23.71" height="42.16" fill="rgb(77,225,49)"/>
<rect x="1470.76" y="619.88" width="23.71" height="42.16" fill="rgb(129,122,117)"/>
<rect x="1494.79" y="619.88" width="23.71" height="42.16" fill="rgb(77,225,49)"/>
<rect x="1518.82" y="619.88" width="23.71" height="42.16" fill="rgb(77,225,49)"/>
<rect x="1542.85" y="619.88" width="23.71" height="42.16" fill="rgb(77,225,49)"/>
<rect x="1566.88" y="619.88" width="23.71" height="42.16" fill="rgb(77,225,49)"/>
<rect x="1590.91" y="619.88" width="23.71" height="42.16" fill="rgb(77,225,49)"/>
<rect x="1614.94" y="619.88" width="23.71" height="42.16" fill="rgb(129,122,117)"/>
<rect x="1638.97" y="619.88" width="23.71" height="42.16" fill="rgb(129,122,117)"/>
<rect x="1663.00" y="619.88" width="23.71" height="42.16" fill="rgb(129,122,117)"/>
<rect x="1687.03" y="619.88" width="23.71" height="42.16" fill="rgb(77,225,49)"/>
<rect x="1711.06" y="619.88" width="23.71" height="42.16" fill="rgb(129,122,117)"/>
<rect x="1735.09" y="619.88" width="23.71" height="42.16" fill="rgb(129,122,117)"/>
<rect x="1759.12" y="619.88" width="23.71" height="42.16" fill="rgb(129,122,117)"/>
<rect x="1783.15" y="619.88" width="23.71" height="42.16" fill="rgb(241,238,80)"/>
<rect x="1086.28" y="662.36" width="23.71" height="42.16" fill="rgb(77,225,49)"/>
<rect x="1110.31" y="662.36" width="23.71" height="42.16" fill="rgb(77,225,49)"/>
<rect x="1134.34" y="662.36" width="23.71" height="42.16" fill="rgb(129,122,117)"/>
<rect x="1158.37" y="662.36" width="23.71" height="42.16" fill="rgb(77,225,49)"/>
<rect x="1182.40" y="662.36" width="23.71" height="42.16" fill="rgb(129,122,117)"/>
<rect x="1206.43" y="662.36" width="23.71" height="42.16" fill="rgb(77,225,49)"/>
<rect x="1230.46" y="662.36" width="23.71" height="42.16" fill="rgb(129,122,117)"/>
<rect x="1254.49" y="662.36" width="23.71" height="42.16" fill="rgb(129,122,117)"/>
<rect x="1278.52" y="662.36" width="23.71" height="42.16" fill="rgb(129,122,117)"/>
<rect x="1302.55" y="662.36" width="23.71" height="42.16" fill="rgb(77,225,49)"/>
<rect x="1326.58" y="662.36" width="23.71" height="42.16" fill="rgb(129,122,117)"/>
<rect x="1350.61" y="662.36" width="23.71" height="42.16" fill="rgb(77,225,49)"/>
<rect x="1374.64" y="662.36" width="23.71" height="42.16" fill="rgb(77,225,49)"/>
<rect x="1398.67" y="662.36" width="23.71" height="42.16" fill="rgb(77,225,49)"/>
<rect x="1422.70" y="662.36" width="23.71" height="42.16" fill="rgb(77,225,49)"/>
<rect x="1446.73" y="662.36" width="23.71" height="42.16" fill="rgb(129,122,117)"/>
<rect x="1470.76" y="662.36" width="23.71" height="42.16" fill="rgb(129,122,117)"/>
<rect x="1494.79" y="662.36" width="23.71" height="42.16" fill="rgb(129,122,117)"/>
<rect x="1518.82" y="662.36" width="23.71" height="42.16" fill="rgb(77,225,49)"/>
<rect x="1542.85" y="662.36" width="23.71" height="42.16" fill="rgb(129,122,117)"/>
<rect x="1566.88" y="662.36" width="23.71" height="42.16" fill="rgb(77,225,49)"/>
<rect x="1590.91" y="662.36" width="23.71" height="42.16" fill="rgb(129,122,117)"/>
<rect x="1614.94" y="662.36" width="23.71" height="42.16" fill="rgb(129,122,117)"/>
<rect x="1638.97" y="662.36" width="23.71" height="42.16" fill="rgb(129,122,117)"/>
<rect x="1663.00" y="662.36" width="23.71" height="42.16" fill="rgb(129,122,117)"/>
<rect x="1687.03" y="662.36" width="23.71" height="42.16" fill="rgb(77,225,49)"/>
<rect x="1711.06" y="662.36" width="23.71" height="42.16" fill="rgb(77,225,49)"/>
<rect x="1735.09" y="662.36" width="23.71" height="42.16" fill="rgb(129,122,117)"/>
<rect x="1110.31" y="704.84" width="23.71" height="42.16" fill="rgb(241,238,80)"/>
<rect x="1134.34" y="704.84" width="23.71" height="42.16" fill="rgb(77,225,49)"/>
<rect x="1158.37" y="704.84" width="23.71" height="42.16" fill="rgb(77,225,49)"/>
<rect x="1182.40" y="704.84" width="23.71" height="42.16" fill="rgb(77,225,49)"/>
<rect x="1206.43" y="704.84" width="23.71" height="42.16" fill="rgb(129,122,117)"/>
<rect x="1230.46" y="704.84" width="23.71" height="42.16" fill="rgb(129,122,117)"/>
<rect x="1254.49" y="704.84" width="23.71" height="42.16" fill="rgb(77,225,49)"/>
<rect x="1278.52" y="704.84" width="23.71" height="42.16" fill="rgb(129,122,117)"/>
<rect x="1302.55" y="704.84" width="23.71" height="42.16" fill="rgb(129,122,117)"/>
<rect x="1326.58" y="704.84" width="23.71" height="42.16" fill="rgb(77,225,49)"/>
<rect x="1350.61" y="704.84" width="23.71" height="42.16" fill="rgb(77,225,49)"/>
<rect x="1374.64" y="704.84" width="23.71" height="42.16" fill="rgb(77,225,49)"/>
<rect x="1398.67" y="704.84" width="23.71" height="42.16" fill="rgb(77,225,49)"/>
<rect x="1422.70" y="704.84" width="23.71" height="42.16" fill="rgb(129,122,117)"/>
<rect x="1446.73" y="704.84" width="23.71" height="42.16" fill="rgb(129,122,117)"/>
<rect x="1470.76" y="704.84" width="23.71" height="42.16" fill="rgb(129,122,117)"/>
<rect x="1494.79" y="704.84" width="23.71" height="42.16" fill="rgb(129,122,117)"/>
<rect x="1518.82" y="704.84" width="23.71" height="42.16" fill="rgb(129,122,117)"/>
<rect x="1542.85" y="704.84" width="23.71" height="42.16" fill="rgb(129,122,117)"/>
<rect x="1566.88" y="704.84" width="23.71" height="42.16" fill="rgb(77,225,49)"/>
<rect x="1590.91" y="704.84" width="23.71" height="42.16" fill="rgb(77,225,49)"/>
<rect x="1614.94" y="704.84" width="23.71" height="42.16" fill="rgb(77,225,49)"/>
<rect x="1638.97" y="704.84" width="23.71" height="42.16" fill="rgb(129,122,117)"/>
<rect x="1663.00" y="704.84" width="23.71" height="42.16" fill="rgb(77,225,49)"/>
<rect x="1687.03" y="704.84" width="23.71" height="42.16" fill="rgb(77,225,49)"/>
<rect x="1711.06" y="704.84" width="23.71" height="42.16" fill="rgb(241,238,80)"/>
<rect x="1158.37" y="747.32" width="23.71" height="42.16" fill="rgb(129,122,117)"/>
<rect x="1182.40" y="747.32" width="23.71" height="42.16" fill="rgb(77,225,49)"/>
<rect x="1206.43" y="747.32" width="23.71" height="42.16" fill="rgb(129,122,117)"/>
<rect x="1230.46" y="747.32" width="23.71" height="42.16" fill="rgb(129,122,117)"/>
<rect x="1254.49" y="747.32" width="23.71" height="42.16" fill="rgb(77,225,49)"/>
<rect x="1278.52" y="747.32" width="23.71" height="42.16" fill="rgb(129,122,117)"/>
<rect x="1302.55" y="747.32" width="23.71" height="42.16" fill="rgb(129,122,117)"/>
<rect x="1326.58" y="747.32" width="23.71" height="42.16" fill="rgb(129,122,117)"/>
<rect x="1350.61" y="747.32" width="23.71" height="42.16" fill="rgb(77,225,49)"/>
<rect x="1374.64" y="747.32" width="23.71" height="42.16" fill="rgb(77,225,49)"/>
<rect x="1398.67" y="747.32" width="23.71" height="42.16" fill="rgb(77,225,49)"/>
<rect x="1422.70" y="747.32" width="23.71" height="42.16" fill="rgb(129,122,117)"/>
<rect x="1446.73" y="747.32" width="23.71" height="42.16" fill="rgb(129,122,117)"/>
<rect x="1470.76" y="747.32" width="23.71" height="42.16" fill="rgb(77,225,49)"/>
<rect x="1494.79" y="747.32" width="23.71" height="42.16" fill="rgb(77,225,49)"/>
<rect x="1518.82" y="747.32" width="23.71" height="42.16" fill="rgb(77,225,49)"/>
<rect x="1542.85" y="747.32" width="23.71" height="42.16" fill="rgb(77,225,49)"/>
<rect x="1566.88" y="747.32" width="23.71" height="42.16" fill="rgb(129,122,117)"/>
<rect x="1590.91" y="747.32" width="23.71" height="42.16" fill="rgb(77,225,49)"/>
<rect x="1614.94" y="747.32" width="23.71" height="42.16" fill="rgb(129,122,117)"/>
<rect x="1638.97" y="747.32" width="23.71" height="42.16" fill="rgb(77,225,49)"/>
<rect x="1663.00" y="747.32" width="23.71" height="42.16" fill="rgb(129,122,117)"/>
<rect x="1206.43" y="789.80" width="23.71" height="42.16" fill="rgb(241,238,80)"/>
<rect x="1230.46" y="789.80" width="23.71" height="42.16" fill="rgb(77,225,49)"/>
<rect x="1254.49" y="789.80" width="23.71" height="42.16" fill="rgb(77,225,49)"/>
<rect x="1278.52" y="789.80" width="23.71" height="42.16" fill="rgb(77,225,49)"/>
<rect x="1302.55" y="789.80" width="23.71" height="42.16" fill="rgb(77,225,49)"/>
<rect x="1326.58" y="789.80" width="23.71" height="42.16" fill="rgb(129,122,117)"/>
<rect x="1350.61" y="789.80" width="23.71" height="42.16" fill="rgb(129,122,117)"/>
<rect x="1374.64" y="789.80" width="23.71" height="42.16" fill="rgb(129,122,117)"/>
<rect x="1398.67" y="789.80" width="23.71" height="42.16" fill="rgb(77,225,49)"/>
<rect x="1422.70" y="789.80" width="23.71" height="42.16" fill="rgb(77,225,49)"/>
<rect x="1446.73" y="789.80" width="23.71" height="42.16" fill="rgb(129,122,117)"/>
<rect x="1470.76" y="789.80" width="23.71" height="42.16" fill="rgb(77,225,49)"/>
<rect x="1494.79" y="789.80" width="23.71" height="42.16" fill="rgb(77,225,49)"/>
<rect x="1518.82" y="789.80" width="23.71" height="42.16" fill="rgb(129,122,117)"/>
<rect x="1542.85" y="789.80" width="23.71" height="42.16" fill="rgb(77,225,49)"/>
<rect x="1566.88" y="789.80" width="23.71" height="42.16" fill="rgb(129,122,117)"/>
<rect x="1590.91" y="789.80" width="23.71" height="42.16" fill="rgb(129,122,117)"/>
<rect x="1614.94" y="789.80" width="23.71" height="42.16" fill="rgb(241,238,80)"/>
<rect x="1326.58" y="832.28" width="23.71" height="42.16" fill="rgb(241,238,80)"/>
<rect x="1350.61" y="832.28" width="23.71" height="42.16" fill="rgb(129,122,117)"/>
<rect x="1374.64" y="832.28" width="23.71" height="42.16" fill="rgb(129,122,117)"/>
<rect x="1398.67" y="832.28" width="23.71" height="42.16" fill="rgb(129,122,117)"/>
<rect x="1422.70" y="832.28" width="23.71" height="42.16" fill="rgb(129,122,117)"/>
<rect x="1446.73" y="832.28" width="23.71" height="42.16" fill="rgb(129,122,117)"/>
<rect x="1470.76" y="832.28" width="23.71" height="42.16" fill="rgb(77,225,49)"/>
<rect x="1494.79" y="832.28" width="23.71" height="42.16" fill="rgb(241,238,80)"/>
</g>
<circle cx="1422.5" cy="449.5" r="435.1" fill="none" stroke="rgba(255,255,255,0.12)" stroke-width="8.8"/>
<circle cx="1422.5" cy="449.5" r="434.7" fill="none" stroke="url(#hatch)" stroke-width="6.6"/>
<circle cx="1422.5" cy="449.5" r="439.5" fill="url(#wg)" style="mix-blend-mode:multiply"/>
</svg>
<div class="panel" style="left:982px;top:942px;width:880px;height:400px;background:rgba(2,0,10,0.345)"></div>
<div class="abs t " style="left:1030.00px;top:989.39px;font-size:28.9px;line-height:35px;letter-spacing:-0.264px;font-weight:bold;color:#f2f2f4;">Results</div>
<div class="sq" style="left:1034.8px;top:1054.7px;background:#ececf0"></div>
<div class="abs t " style="left:1068.00px;top:1050.95px;font-size:21.2px;line-height:25px;letter-spacing:0.540px;color:#ececee;">Total Dies: 540</div>
<div class="sq" style="left:1034.8px;top:1097.2px;background:#64d14e"></div>
<div class="abs t " style="left:1068.00px;top:1093.40px;font-size:21.2px;line-height:25px;letter-spacing:0.291px;color:#ececee;">Good Dies: 260</div>
<div class="sq" style="left:1034.8px;top:1139.6px;background:#a39890"></div>
<div class="abs t " style="left:1068.00px;top:1135.85px;font-size:21.2px;line-height:25px;letter-spacing:0.449px;color:#ececee;">Defective Dies: 260</div>
<div class="sq" style="left:1034.8px;top:1182.0px;background:#f8f452"></div>
<div class="abs t " style="left:1068.00px;top:1178.30px;font-size:21.2px;line-height:25px;letter-spacing:0.310px;color:#ececee;">Partial Dies: 20</div>
<div class="sq" style="left:1034.8px;top:1224.5px;background:#d4513c"></div>
<div class="abs t " style="left:1068.00px;top:1220.75px;font-size:21.2px;line-height:25px;letter-spacing:0.215px;color:#ececee;">Lost Dies: 0</div>
<svg class="abs" width="22" height="22" viewBox="0 0 22 22" style="overflow:visible;left:1424px;top:1053.2px"><circle cx="10" cy="10" r="9.2" fill="none" stroke="#ececf0" stroke-width="1.3"/><path d="M10 1 A9 9 0 0 0 10 19 Z" fill="#ececf0"/></svg>
<div class="abs t " style="left:1459.40px;top:1050.95px;font-size:21.2px;line-height:25px;letter-spacing:0.480px;color:#ececee;">Fab Yield: 50.8533%</div>
<svg class="abs" width="22" height="22" viewBox="0 0 22 22" style="overflow:visible;left:1424px;top:1095.7px"><circle cx="10" cy="10.5" r="6.9" fill="none" stroke="#ececf0" stroke-width="2.3"/><path d="M2.8 17.4 L17.6 3.4" stroke="#ececf0" stroke-width="2.2" stroke-linecap="round"/></svg>
<div class="abs t " style="left:1459.40px;top:1093.40px;font-size:21.2px;line-height:25px;letter-spacing:0.519px;color:#ececee;">Wafer Diameter: 300mm</div>
<svg class="abs" width="22" height="22" viewBox="0 0 22 22" style="overflow:visible;left:1424px;top:1138.1px"><circle cx="10.3" cy="9.3" r="10" fill="none" stroke="#b4b4b8" stroke-width="1" stroke-dasharray="1.6 1.6"/></svg>
<div class="abs t " style="left:1459.40px;top:1135.85px;font-size:21.2px;line-height:25px;letter-spacing:0.670px;color:#ececee;">Wafer Area: 706.8583cm²</div>
<svg class="abs" width="22" height="22" viewBox="0 0 22 22" style="overflow:visible;left:1424px;top:1180.5px"><rect x="1.6" y="-0.7" width="18" height="19" fill="none" stroke="#b4b4b8" stroke-width="1" stroke-dasharray="1.6 1.6"/></svg>
<div class="abs t " style="left:1459.40px;top:1178.30px;font-size:21.2px;line-height:25px;letter-spacing:0.323px;color:#ececee;">Total Die Area: 617.328cm²</div>
</body></html>
